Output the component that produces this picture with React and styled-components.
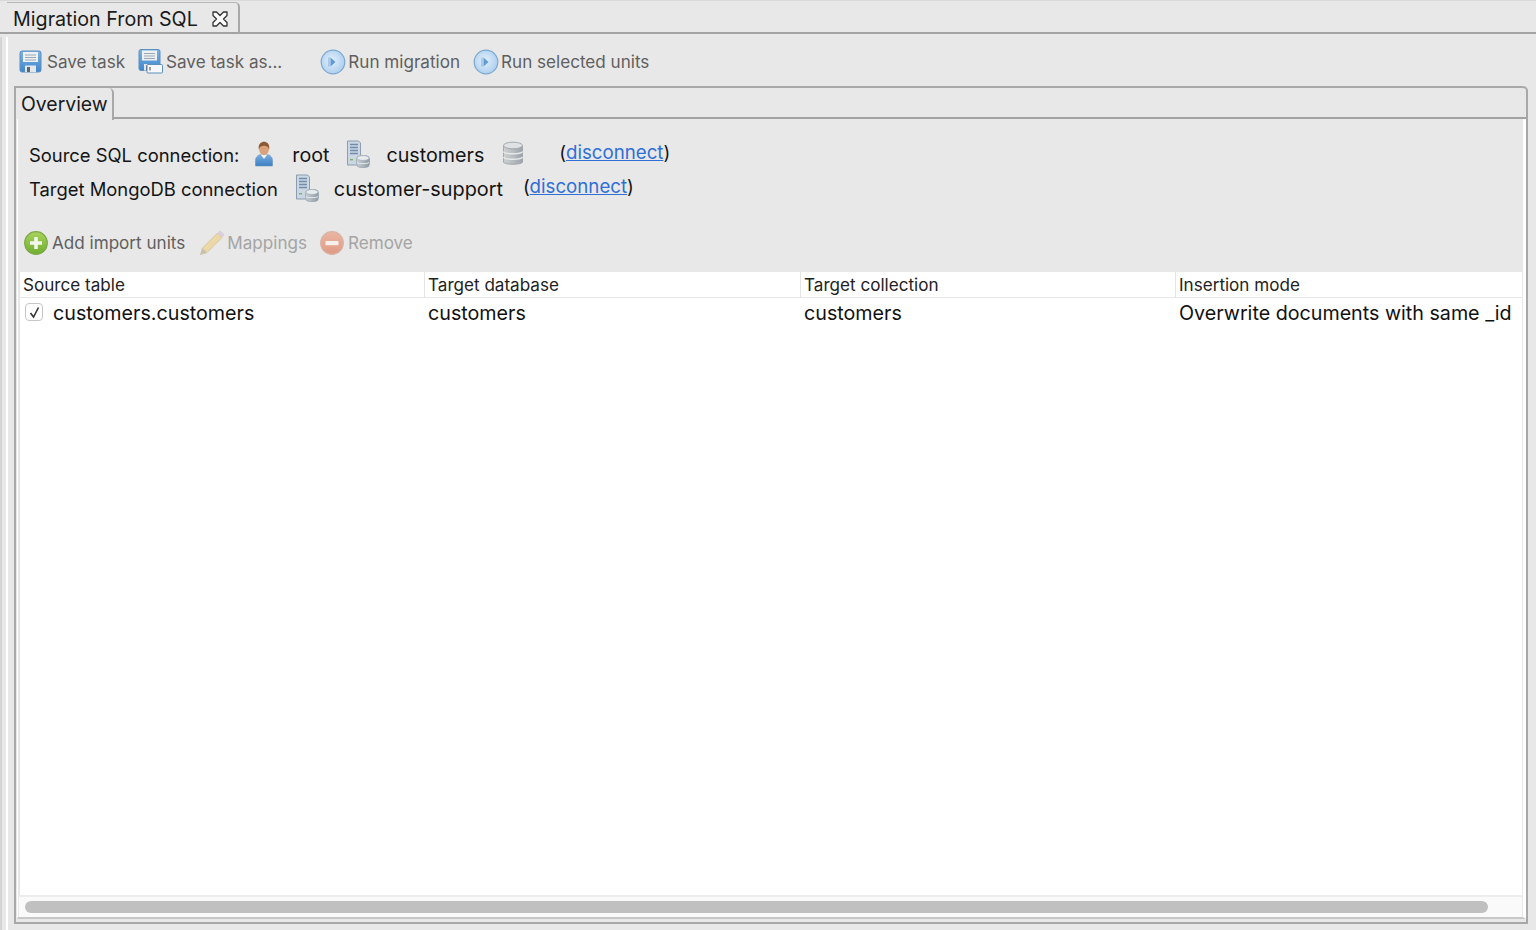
import React from "react";
import styled, { createGlobalStyle } from "styled-components";

const GlobalStyle = createGlobalStyle`
  html, body {
    margin: 0;
    padding: 0;
    height: 100%;
    overflow: hidden;
    background: #e8e8e8;
  }
  #root {
    height: 100%;
  }
  * {
    box-sizing: border-box;
  }
`;

const SaveIcon = ({ as_ }) => (
  <svg width="26" height="26" viewBox="0 0 26 26">
    <defs>
      <linearGradient id={`disk${as_ ? "a" : "b"}`} x1="0" y1="0" x2="0" y2="1">
        <stop offset="0" stopColor="#7db3e4" />
        <stop offset="1" stopColor="#3f86cc" />
      </linearGradient>
    </defs>
    <rect x="1" y={as_ ? 0.5 : 2} width="21" height="21" rx="2" fill={`url(#disk${as_ ? "a" : "b"})`} stroke="#5d8fbe" />
    <rect x="4" y={as_ ? 1.5 : 3} width="15" height="10" fill="#eef1f4" />
    <path d={as_ ? "M6 4.5h11M6 7h11M6 9.5h11" : "M6 6h11M6 8.5h11M6 11h11"} stroke="#9aa7b3" strokeWidth="1" />
    <rect x="6" y={as_ ? 15 : 16.5} width="11" height="6.5" fill="#e3e6ea" />
    <rect x="8" y={as_ ? 16.5 : 18} width="3" height="5" fill="#5b6670" />
    {as_ && <rect x="9" y="15.5" width="15.5" height="8.5" rx="1" fill="#f6f8fb" stroke="#5d8fbe" />}
    {as_ && <path d="M12 18v3.5" stroke="#444" strokeWidth="1" />}
  </svg>
);

const RunIcon = () => (
  <svg width="26" height="26" viewBox="0 0 26 26">
    <defs>
      <radialGradient id="runBg" cx="0.45" cy="0.45" r="0.6">
        <stop offset="0" stopColor="#e4f0fb" />
        <stop offset="1" stopColor="#a9cdee" />
      </radialGradient>
    </defs>
    <circle cx="13" cy="13" r="11.8" fill="url(#runBg)" stroke="#7ba7d0" strokeWidth="1.2" />
    <path d="M10.500 8.500l5 4.500-5 4.500z" fill="#5f9ad6" />
    <path d="M9 8.500v9" stroke="#8db6de" strokeWidth="1.2" />
  </svg>
);

const UserIcon = () => (
  <svg width="20" height="26" viewBox="0 0 20 26">
    <defs>
      <linearGradient id="userBody" x1="0" y1="0" x2="0" y2="1">
        <stop offset="0" stopColor="#7db0e2" />
        <stop offset="1" stopColor="#3c7fc4" />
      </linearGradient>
    </defs>
    <path d="M1.500 25v-5.500c0-4 3.500-6.500 8.500-6.500s8.500 2.500 8.500 6.500V25z" fill="url(#userBody)" stroke="#6d94b8" strokeWidth="0.6" />
    <path d="M6.500 13.500l3.500 4.500 3.500-4.500z" fill="#f4efe9" />
    <ellipse cx="10" cy="8" rx="5" ry="6" fill="#d9a27a" />
    <path d="M4.800 8.500C4 2.800 7.200.8 10 .8s6 2 5.200 7.700c-.8-2.700-2.700-3.700-5.200-3.700S5.600 5.800 4.800 8.500z" fill="#8c5a34" />
  </svg>
);

const ServerIcon = () => (
  <svg width="24" height="28" viewBox="0 0 24 28">
    <defs>
      <linearGradient id="srvDb" x1="0" y1="0" x2="1" y2="0">
        <stop offset="0" stopColor="#c8cfd5" />
        <stop offset="1" stopColor="#8f9aa4" />
      </linearGradient>
    </defs>
    <path d="M1.500 1h11l2 2v22h-13z" fill="#cbd7e3" stroke="#8b9dae" />
    <path d="M4 4.500h8M4 7.500h8M4 10.500h8M4 13.500h8" stroke="#6f8dab" strokeWidth="1.600" />
    <rect x="4" y="19" width="3" height="1.400" fill="#7fae6a" />
    <rect x="10.500" y="15.500" width="13" height="12" rx="4" fill="url(#srvDb)" stroke="#8f9aa4" strokeWidth="0.600" />
    <ellipse cx="17" cy="18" rx="6" ry="2.400" fill="#e8ecef" stroke="#98a3ad" strokeWidth="0.500" />
    <path d="M11 22.500c1.500 1.600 10.500 1.600 12 0" stroke="#e8ecef" fill="none" />
  </svg>
);

const DatabaseIcon = () => (
  <svg width="22" height="26" viewBox="0 0 22 26">
    <defs>
      <linearGradient id="dbBody" x1="0" y1="0" x2="1" y2="0">
        <stop offset="0" stopColor="#cdd1d4" />
        <stop offset="0.5" stopColor="#b6bcc0" />
        <stop offset="1" stopColor="#9ca3a8" />
      </linearGradient>
    </defs>
    <path d="M1.500 4.500v16.500c0 3 19 3 19 0V4.500z" fill="url(#dbBody)" stroke="#a3a9ae" />
    <ellipse cx="11" cy="4.500" rx="9.500" ry="3.300" fill="#dfe2e4" stroke="#a3a9ae" />
    <path d="M1.500 10.500c1 3 18 3 19 0M1.500 16c1 3 18 3 19 0" stroke="#e8eaeb" strokeWidth="1.400" fill="none" />
  </svg>
);

const CircleIcon = ({ id, from, to, edge, minus }) => (
  <svg width="26" height="26" viewBox="0 0 26 26">
    <defs>
      <linearGradient id={id} x1="0" y1="0" x2="0" y2="1">
        <stop offset="0" stopColor={from} />
        <stop offset="1" stopColor={to} />
      </linearGradient>
    </defs>
    <circle cx="12" cy="13" r="11.300" fill={`url(#${id})`} stroke={edge} strokeWidth="1.200" />
    {minus ? (
      <rect x="5.500" y="11" width="13" height="4.200" fill="#f6efec" />
    ) : (
      <path d="M12 7v12M6 13h12" stroke="#f4f8ec" strokeWidth="3.600" />
    )}
  </svg>
);

const PencilIcon = () => (
  <svg width="26" height="26" viewBox="0 0 26 26">
    <path d="M1.500 24.500l2-6.500L18.500 3l4.500 4.500L8 22.500z" fill="#ecd8a6" stroke="#cdbf9c" strokeWidth="0.800" />
    <path d="M18.500 3l1.800-1.800c.6-.5 1.300-.5 1.900 0l2.600 2.600c.5.600.5 1.300 0 1.900L23 7.500z" fill="#d9cfe0" />
    <path d="M1.500 24.500l2-6.500 4.500 4.500z" fill="#c9c1b0" />
  </svg>
);

const CloseGlyph = () => (
  <svg width="18" height="18" viewBox="0 0 18 18">
    <path
      d="M2 2h3.500L9 5.500 12.500 2H16v3.500L12.500 9l3.500 3.500V16h-3.500L9 12.500 5.500 16H2v-3.500L5.500 9 2 5.500z"
      fill="#fafafa"
      stroke="#333"
      strokeWidth="1.300"
      strokeLinejoin="round"
    />
  </svg>
);

const App = () => {
  return (
    <>
      <GlobalStyle />
      <Page>
        <EditorTabs>
          <EditorTab>
            Migration From SQL
            <CloseSlot>
              <CloseGlyph />
            </CloseSlot>
          </EditorTab>
        </EditorTabs>

        <EditorBody>
          <SideStrip />
          <Content>
            <Toolbar>
              <ToolButton>
                <SaveIcon />
                Save task
              </ToolButton>
              <ToolButton $ml={13}>
                <SaveIcon as_ />
                Save task as...
              </ToolButton>
              <ToolButton $ml={38}>
                <RunIcon />
                Run migration
              </ToolButton>
              <ToolButton $ml={13}>
                <RunIcon />
                Run selected units
              </ToolButton>
            </Toolbar>

            <Frame>
              <FrameTabs>
                <FrameTab>Overview</FrameTab>
              </FrameTabs>

              <FrameBody>
                <ConnectionPanel>
                  <ConnectionRow>
                    <ConnectionLabel>Source SQL connection:</ConnectionLabel>
                    <IconSlot $ml={15}>
                      <UserIcon />
                    </IconSlot>
                    <ConnectionText $ml={18}>root</ConnectionText>
                    <IconSlot $ml={17}>
                      <ServerIcon />
                    </IconSlot>
                    <ConnectionText $ml={16}>customers</ConnectionText>
                    <IconSlot $ml={18}>
                      <DatabaseIcon />
                    </IconSlot>
                    <Disconnect $ml={35}>
                      (<a href="#disconnect">disconnect</a>)
                    </Disconnect>
                  </ConnectionRow>
                  <ConnectionRow>
                    <ConnectionLabel>Target MongoDB connection</ConnectionLabel>
                    <IconSlot $ml={17}>
                      <ServerIcon />
                    </IconSlot>
                    <CustomerSupport $ml={15}>customer-support</CustomerSupport>
                    <Disconnect $ml={20}>
                      (<a href="#disconnect">disconnect</a>)
                    </Disconnect>
                  </ConnectionRow>
                </ConnectionPanel>

                <UnitsToolbar>
                  <ToolButton>
                    <CircleIcon id="addBg" from="#a8d35c" to="#6fae2e" edge="#7da84a" />
                    Add import units
                  </ToolButton>
                  <ToolButton $ml={14} $disabled>
                    <PencilIcon />
                    Mappings
                  </ToolButton>
                  <ToolButton $ml={13} $disabled>
                    <CircleIcon id="removeBg" from="#eab6a2" to="#e09a84" edge="#d8b3a5" minus />
                    Remove
                  </ToolButton>
                </UnitsToolbar>

                <TablePanel>
                  <HeaderRow>
                    <HeaderCell>Source table</HeaderCell>
                    <HeaderCell>Target database</HeaderCell>
                    <HeaderCell>Target collection</HeaderCell>
                    <HeaderCell>Insertion mode</HeaderCell>
                  </HeaderRow>
                  <DataRow>
                    <DataCell>
                      <Check>
                        <svg width="13" height="13" viewBox="0 0 13 13">
                          <path d="M2.500 7L5.500 11 10.500 1.500" fill="none" stroke="#333" strokeWidth="1.600" />
                        </svg>
                      </Check>
                      customers.customers
                    </DataCell>
                    <DataCell>customers</DataCell>
                    <DataCell>customers</DataCell>
                    <DataCell>Overwrite documents with same _id</DataCell>
                  </DataRow>
                  <TableFill />
                  <ScrollTrack>
                    <ScrollThumb />
                  </ScrollTrack>
                </TablePanel>
              </FrameBody>
            </Frame>
          </Content>
        </EditorBody>
      </Page>
    </>
  );
};

export default App;

const FONT = `Inter, "Liberation Sans", sans-serif`;

const Page = styled.div`
  height: 930px;
  width: 1536px;
  display: flex;
  flex-direction: column;
  background: #e8e8e8;
  border-top: 1px solid #d9d9d9;
  font-family: ${FONT};
  overflow: hidden;
`;

const EditorTabs = styled.div`
  height: 33px;
  flex: none;
  padding-left: 7px;
  padding-top: 1px;
  border-bottom: 2px solid #a3a3a3;
  display: flex;
`;

const EditorTab = styled.div`
  width: 233px;
  height: 31px;
  padding-left: 6px;
  padding-top: 1px;
  display: flex;
  align-items: center;
  border-top: 1px solid #b5b5b5;
  border-right: 2px solid #a8a8a8;
  border-top-right-radius: 5px;
  margin-bottom: -1px;
  font-size: 19.700px;
  color: #1a1a1a;
`;

const CloseSlot = styled.span`
  display: inline-flex;
  margin-left: 13px;
`;

const EditorBody = styled.div`
  flex: 1;
  display: flex;
  min-height: 0;
  padding-top: 3px;
`;

const SideStrip = styled.div`
  width: 9px;
  flex: none;
  background: linear-gradient(
    to right,
    #d4d4d4 0 2px,
    #e8e8e8 2px 6px,
    #ffffff 6px 8px,
    #e8e8e8 8px
  );
`;

const Content = styled.div`
  flex: 1;
  min-width: 0;
  display: flex;
  flex-direction: column;
  padding-right: 8px;
  padding-bottom: 6px;
`;

const Toolbar = styled.div`
  height: 49px;
  flex: none;
  display: flex;
  align-items: center;
  padding-left: 10px;
`;

const ToolButton = styled.div`
  display: flex;
  align-items: center;
  gap: 2px;
  margin-left: ${(p) => p.$ml || 0}px;
  font-size: 17.100px;
  color: ${(p) => (p.$disabled ? "#a4a4a4" : "#5f5f5f")};
`;

const Frame = styled.div`
  flex: 1;
  min-height: 0;
  margin-left: 5px;
  padding-bottom: 3px;
  display: flex;
  flex-direction: column;
  border-left: 2px solid #a8a8a8;
  border-right: 2px solid #a8a8a8;
  border-bottom: 2px solid #a8a8a8;
  border-top-right-radius: 5px;
`;

const FrameTabs = styled.div`
  height: 33px;
  flex: none;
  display: flex;
  border-top: 2px solid #a8a8a8;
  border-bottom: 2px solid #a3a3a3;
  border-top-right-radius: 4px;
`;

const FrameTab = styled.div`
  width: 98px;
  height: 32px;
  margin-bottom: -2px;
  padding-left: 5px;
  padding-bottom: 1px;
  display: flex;
  align-items: center;
  background: #e8e8e8;
  border-right: 2px solid #a8a8a8;
  border-top-right-radius: 5px;
  font-size: 19.400px;
  color: #1a1a1a;
`;

const FrameBody = styled.div`
  flex: 1;
  min-height: 0;
  display: flex;
  flex-direction: column;
  margin-left: 1px;
  padding-left: 1px;
  padding-right: 1px;
  border-left: 1px solid #ffffff;
  border-right: 3px solid #ffffff;
  border-bottom: 2px solid #c8c8c8;
`;

const ConnectionPanel = styled.div`
  height: 95px;
  flex: none;
  padding-top: 22px;
  padding-left: 10px;
  display: flex;
  flex-direction: column;
  gap: 6px;
`;

const ConnectionRow = styled.div`
  height: 28px;
  display: flex;
  align-items: center;
`;

const ConnectionLabel = styled.span`
  font-size: 18.400px;
  color: #141414;
  white-space: nowrap;
`;

const ConnectionText = styled.span`
  margin-left: ${(p) => p.$ml || 0}px;
  font-size: 19.700px;
  color: #141414;
  white-space: nowrap;
`;

const CustomerSupport = styled(ConnectionText)`
  font-size: 19.850px;
`;

const IconSlot = styled.span`
  display: inline-flex;
  margin-left: ${(p) => p.$ml || 0}px;
  margin-top: -3px;
`;

const Disconnect = styled.span`
  margin-left: ${(p) => p.$ml || 0}px;
  margin-top: -5px;
  font-size: 18.700px;
  color: #141414;
  white-space: nowrap;

  a {
    color: #2f6fd6;
    text-decoration: underline;
  }
`;

const UnitsToolbar = styled.div`
  height: 58px;
  flex: none;
  display: flex;
  align-items: center;
  padding-left: 5px;
  padding-bottom: 1px;
`;

const TablePanel = styled.div`
  flex: 1;
  min-height: 0;
  background: #ffffff;
  box-shadow: inset 1px 0 0 #e4e4e4;
  display: flex;
  flex-direction: column;
`;

const HeaderRow = styled.div`
  height: 26px;
  flex: none;
  display: grid;
  grid-template-columns: 405px 376px 375px 1fr;
  border-bottom: 1px solid #e6e6e6;
`;

const HeaderCell = styled.div`
  padding-left: 3px;
  display: flex;
  align-items: center;
  font-size: 17.100px;
  color: #222222;
  white-space: nowrap;
  border-left: 1px solid #e4e4e4;

  &:first-child {
    border-left: none;
    padding-left: 4px;
  }
`;

const DataRow = styled.div`
  height: 31px;
  flex: none;
  padding-bottom: 2px;
  display: grid;
  grid-template-columns: 405px 376px 375px 1fr;
`;

const DataCell = styled.div`
  padding-left: 4px;
  display: flex;
  align-items: center;
  font-size: 19.700px;
  color: #111111;
  white-space: nowrap;
`;

const Check = styled.span`
  width: 18px;
  height: 18px;
  flex: none;
  margin-left: 2px;
  margin-right: 10px;
  margin-top: -1px;
  display: inline-flex;
  align-items: center;
  justify-content: center;
  background: #ffffff;
  border: 1px solid #c6c6c6;
  border-radius: 4px;
`;

const TableFill = styled.div`
  flex: 1;
  min-height: 0;
`;

const ScrollTrack = styled.div`
  height: 22px;
  flex: none;
  padding: 4px 34px 0 6px;
  background: #fafafa;
  border-top: 2px solid #ededed;
`;

const ScrollThumb = styled.div`
  height: 12px;
  background: #c0c0c0;
  border-radius: 6px;
`;
